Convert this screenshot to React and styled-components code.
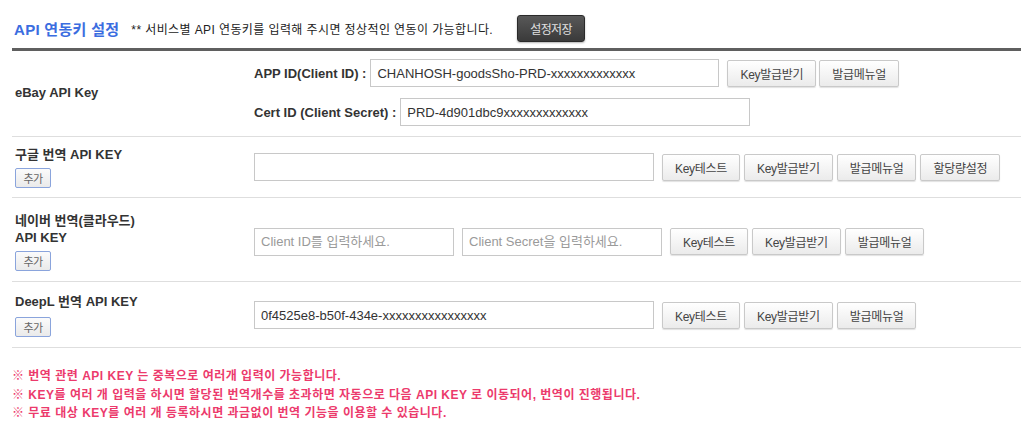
import React from "react";
import styled, { createGlobalStyle } from "styled-components";

const FONT = `"Liberation Sans", "Noto Sans CJK KR", sans-serif`;

const Global = createGlobalStyle`
  html, body { margin: 0; padding: 0; background: #fff; }
  body { font-family: ${FONT}; color: #333; width: 1021px; }
  * { box-sizing: border-box; }
`;

const Page = styled.div`
  margin-left: 12px;
  width: 1009px;
`;

const Header = styled.div`
  display: flex;
  align-items: center;
  padding: 15px 0 6px 2px;
  border-bottom: 3px solid #5f5f5f;
`;

const Title = styled.h2`
  margin: 0;
  font-size: 15px;
  font-weight: bold;
  color: #3b6de0;
  letter-spacing: 0.3px;
`;

const Subtitle = styled.span`
  margin-left: 12px;
  font-size: 12px;
  color: #222;
  letter-spacing: 0.4px;
`;

const SaveButton = styled.button`
  margin-left: 24px;
  width: 68px;
  height: 27px;
  border: 1px solid #2a2a2a;
  border-radius: 3px;
  background: linear-gradient(#585858, #3a3a3a);
  color: #e0e0e0;
  font-family: ${FONT};
  font-size: 12px;
  letter-spacing: -0.6px;
  padding: 0;
  box-shadow: 0 1px 2px rgba(0, 0, 0, 0.3);
`;

const Row = styled.div`
  display: grid;
  grid-template-columns: 242px 1fr;
  align-items: center;
  padding: ${(p) => p.$pad};
  border-bottom: 1px solid #dedede;
`;

const LabelCell = styled.div`
  padding-left: 3px;
  display: flex;
  flex-direction: column;
  align-items: flex-start;
`;

const Label = styled.div`
  font-size: 13px;
  font-weight: bold;
  line-height: 17px;
  color: #333;
`;

const AddButton = styled.button`
  margin-top: ${(p) => p.$mt || 5}px;
  width: 36px;
  height: 20px;
  padding: 0;
  border: 1px solid #8aa4dc;
  border-radius: 2px;
  background: linear-gradient(#fbfbfb, #eaeaea);
  color: #666;
  font-family: ${FONT};
  font-size: 11px;
  letter-spacing: -0.5px;
`;

const Content = styled.div`
  display: flex;
  flex-direction: column;
  gap: 11px;
`;

const Line = styled.div`
  display: flex;
  align-items: center;
`;

const FieldLabel = styled.span`
  font-size: 13px;
  font-weight: bold;
  color: #333;
  margin-right: 4px;
  white-space: nowrap;
`;

const Input = styled.input`
  width: ${(p) => p.$w}px;
  height: 28px;
  border: 1px solid #c8c8c8;
  background: #fff;
  padding: 0 6px;
  font-family: ${FONT};
  font-size: 13px;
  color: #333;
  outline: none;
  margin-right: ${(p) => p.$mr ?? 8}px;
  &::placeholder { color: #9a9a9a; }
`;

const Buttons = styled.div`
  display: flex;
  gap: ${(p) => p.$gap ?? 4}px;
`;

const Btn = styled.button`
  height: 27px;
  padding: 0 12px;
  border: 1px solid #c9c9c9;
  border-radius: 2px;
  background: linear-gradient(#ffffff, #ebebeb);
  box-shadow: 0 1px 1px rgba(0, 0, 0, 0.12);
  color: #444;
  font-family: ${FONT};
  font-size: 12px;
  letter-spacing: -0.3px;
  white-space: nowrap;
`;

const Notes = styled.div`
  padding-top: 19px;
  font-size: 12px;
  font-weight: bold;
  line-height: 18.5px;
  color: #ec3a6c;
  letter-spacing: 0.5px;
`;

const Note = styled.div``;

const ButtonGroup = ({ items, gap }) => (
  <Buttons $gap={gap}>
    {items.map((t) => (
      <Btn key={t}>{t}</Btn>
    ))}
  </Buttons>
);

export default function App() {
  return (
    <Page>
      <Global />
      <Header>
        <Title>API 연동키 설정</Title>
        <Subtitle>** 서비스별 API 연동키를 입력해 주시면 정상적인 연동이 가능합니다.</Subtitle>
        <SaveButton>설정저장</SaveButton>
      </Header>

      <Row $pad="8px 0 10px">
        <LabelCell>
          <Label>eBay API Key</Label>
        </LabelCell>
        <Content>
          <Line>
            <FieldLabel>APP ID(Client ID) :</FieldLabel>
            <Input $w={349} defaultValue="CHANHOSH-goodsSho-PRD-xxxxxxxxxxxxx" />
            <ButtonGroup items={["Key발급받기", "발급메뉴얼"]} gap={3} />
          </Line>
          <Line>
            <FieldLabel>Cert ID (Client Secret) :</FieldLabel>
            <Input $w={350} defaultValue="PRD-4d901dbc9xxxxxxxxxxxxx" />
          </Line>
        </Content>
      </Row>

      <Row $pad="9px 0 9px">
        <LabelCell>
          <Label>구글 번역 API KEY</Label>
          <AddButton>추가</AddButton>
        </LabelCell>
        <Line>
          <Input $w={400} />
          <ButtonGroup items={["Key테스트", "Key발급받기", "발급메뉴얼", "할당량설정"]} />
        </Line>
      </Row>

      <Row $pad="14px 0 10px">
        <LabelCell>
          <Label>
            네이버 번역(클라우드)
            <br />
            API KEY
          </Label>
          <AddButton>추가</AddButton>
        </LabelCell>
        <Line>
          <Input $w={200} placeholder="Client ID를 입력하세요." />
          <Input $w={200} placeholder="Client Secret을 입력하세요." />
          <ButtonGroup items={["Key테스트", "Key발급받기", "발급메뉴얼"]} />
        </Line>
      </Row>

      <Row $pad="11px 0 10px">
        <LabelCell>
          <Label>DeepL 번역 API KEY</Label>
          <AddButton $mt={7}>추가</AddButton>
        </LabelCell>
        <Line>
          <Input $w={400} defaultValue="0f4525e8-b50f-434e-xxxxxxxxxxxxxxxx" />
          <ButtonGroup items={["Key테스트", "Key발급받기", "발급메뉴얼"]} />
        </Line>
      </Row>

      <Notes>
        <Note>※ 번역 관련 API KEY 는 중복으로 여러개 입력이 가능합니다.</Note>
        <Note>※ KEY를 여러 개 입력을 하시면 할당된 번역개수를 초과하면 자동으로 다음 API KEY 로 이동되어, 번역이 진행됩니다.</Note>
        <Note>※ 무료 대상 KEY를 여러 개 등록하시면 과금없이 번역 기능을 이용할 수 있습니다.</Note>
      </Notes>
    </Page>
  );
}
